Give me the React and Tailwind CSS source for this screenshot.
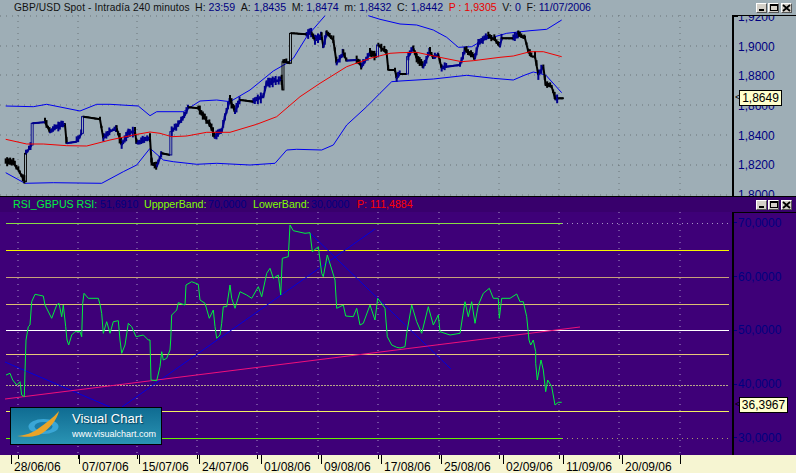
const crop = (ox, oy, list) => {
  const out = [];
  for (let i = 0; i < list.length; i += 2) out.push([ox + list[i] / 3, oy + list[i + 1] / 3]);
  return out;
};
const toPoints = (pts) => pts.map(([x, y]) => `${x.toFixed(1)},${y.toFixed(1)}`).join(" ");

const gridX = [18, 78, 137, 197, 257, 318, 378, 439, 499, 559, 619, 680];
const priceGridY = [16, 46, 75, 105, 135, 165, 195];

const price = [
  ...crop(0, 0, [17, 485, 40, 490, 55, 510, 75, 545, 78, 460, 95, 435, 98, 370, 135, 367, 150, 395, 175, 380, 195, 375, 200, 430, 230, 425, 245, 400, 250, 350, 300, 358, 310, 415, 330, 395, 350, 385, 365, 435, 385, 400, 405, 395, 410, 430, 450, 415, 455, 490, 470, 500, 485, 460, 510, 465, 515, 395, 530, 380, 555, 345, 565, 322, 595, 325, 610, 350, 630, 375, 645, 410, 665, 395, 675, 350, 690, 300, 705, 335, 720, 300, 760, 305, 790, 290, 800, 250, 845, 240, 848, 270, 850, 185, 870, 190, 873, 100, 920, 103, 935, 100, 945, 120, 965, 110, 970, 140, 980, 100, 1000, 120, 1010, 190, 1030, 160, 1040, 182, 1070, 180, 1085, 200, 1110, 160, 1130, 170, 1135, 135, 1160, 160, 1165, 210, 1185, 210, 1190, 235]),
  ...crop(400, 0, [0, 222, 20, 222, 25, 170, 40, 145, 50, 175, 70, 200, 90, 155, 100, 175, 115, 165, 125, 205, 140, 200, 180, 195, 195, 150, 225, 175, 235, 130, 265, 110, 285, 120, 300, 140, 305, 115, 340, 115, 355, 105, 375, 115, 385, 155, 395, 170, 405, 170, 415, 225, 430, 200, 437, 255, 455, 260, 467, 300, 475, 295, 490, 295]),
];

const upperBand = [
  crop(0, 0, [17, 318, 100, 320, 140, 313, 240, 333, 290, 313, 330, 313, 415, 318, 450, 347, 470, 335, 550, 335, 600, 303, 650, 300, 690, 305, 750, 270, 820, 213, 860, 190, 880, 175, 920, 110, 975, 47]),
  [...crop(0, 0, [1105, 47, 1140, 58, 1200, 72]), ...crop(400, 0, [50, 75, 100, 90, 140, 112, 175, 142, 215, 140, 250, 120, 320, 100, 390, 92, 440, 88, 485, 60])],
];
const lowerBand = [
  ...crop(0, 0, [17, 518, 75, 550, 160, 548, 305, 550, 370, 515, 410, 495, 450, 445, 490, 480, 520, 485, 590, 493, 650, 490, 750, 495, 825, 490, 860, 450, 890, 448, 965, 450, 1000, 435, 1040, 375, 1100, 320, 1140, 280, 1175, 245, 1200, 243]),
  ...crop(400, 0, [100, 237, 200, 226, 280, 235, 340, 240, 375, 225, 400, 216, 437, 225, 485, 278]),
];
const average = [
  ...crop(0, 0, [17, 418, 80, 432, 130, 432, 200, 437, 260, 438, 330, 420, 400, 405, 450, 396, 480, 400, 515, 410, 560, 408, 620, 397, 690, 397, 770, 373, 830, 350, 900, 290, 960, 250, 1040, 200, 1110, 175, 1170, 160, 1200, 158]),
  ...crop(400, 0, [50, 157, 110, 170, 185, 185, 220, 182, 300, 172, 340, 168, 390, 155, 430, 155, 485, 170]),
];

const rsi = [
  ...crop(0, 340, [18, 105, 30, 100, 38, 120, 50, 135, 60, 125, 65, 165, 73, 170, 75, 95, 78, 0]),
  ...crop(0, 190, [85, 410, 90, 405, 95, 335, 105, 313, 130, 318, 135, 345, 150, 375, 155, 385, 170, 345, 177, 340, 185, 380, 190, 345, 197, 410, 201, 450, 206, 465, 215, 435, 225, 425, 240, 425, 245, 440, 248, 340, 252, 310, 265, 325, 295, 325, 300, 343, 305, 370, 310, 430, 320, 395, 330, 430, 340, 395, 355, 392, 360, 450, 365, 490, 375, 465, 385, 400, 395, 410, 408, 440, 430, 435, 445, 450]),
  ...crop(0, 340, [450, 0, 453, 120, 470, 122, 480, 80, 485, 35, 490, 60, 500, 55, 510, 30, 512, 0]),
  ...crop(0, 190, [515, 375, 530, 360, 535, 338, 555, 345, 558, 285, 575, 275, 595, 283, 600, 330, 615, 340, 628, 385, 640, 360, 645, 410, 650, 445, 660, 435, 665, 400, 670, 350, 680, 350, 690, 285, 695, 325, 705, 355, 720, 305, 740, 315, 755, 325, 775, 290, 785, 320, 800, 250, 810, 235, 820, 265, 835, 255, 842, 315, 847, 205, 865, 200, 870, 105, 880, 122, 915, 130, 930, 128, 937, 185, 955, 170, 965, 250, 970, 260, 982, 195, 1005, 270, 1010, 355, 1030, 345, 1037, 378, 1060, 380, 1070, 355, 1080, 405, 1090, 400, 1110, 345, 1125, 390, 1133, 325, 1155, 355, 1162, 440, 1175, 465, 1190, 472]),
  ...crop(400, 190, [0, 474, 15, 470, 20, 430, 35, 345, 50, 395, 65, 430, 85, 350, 100, 405, 115, 375, 120, 425, 150, 435, 180, 430, 195, 335, 205, 380, 215, 335, 225, 400, 235, 345, 250, 310, 268, 295, 280, 325, 295, 325, 298, 385, 305, 325, 330, 325, 350, 312, 360, 335, 370, 335, 380, 380, 387, 450]),
  ...crop(400, 340, [392, 15, 400, 0, 407, 35, 407, 70, 412, 120, 423, 60, 430, 90, 437, 155, 443, 120, 455, 140, 465, 195, 475, 187, 485, 187]),
];

const levels = [
  { y: 250, color: "#f4f400" },
  { y: 277, color: "#c8a078" },
  { y: 304, color: "#dcc070" },
  { y: 330, color: "#ffffff" },
  { y: 354, color: "#e8c878" },
  { y: 411, color: "#f4f060" },
];

const headerItems = [
  ["H:", "23:59"],
  ["A:", "1,8435"],
  ["M:", "1,8474"],
  ["m:", "1,8432"],
  ["C:", "1,8442"],
];

const dates = [
  { label: "28/06/06", x: 11, grid: 18 },
  { label: "07/07/06", x: 79, grid: 78 },
  { label: "15/07/06", x: 139, grid: 137 },
  { label: "24/07/06", x: 199, grid: 197 },
  { label: "01/08/06", x: 261, grid: 257 },
  { label: "09/08/06", x: 321, grid: 318 },
  { label: "17/08/06", x: 381, grid: 378 },
  { label: "25/08/06", x: 441, grid: 439 },
  { label: "02/09/06", x: 503, grid: 499 },
  { label: "11/09/06", x: 563, grid: 559 },
  { label: "20/09/06", x: 622, grid: 619 },
  { label: "", x: 680, grid: 680 },
];

// price candles are faked from the traced close line: short wicks every 1.5px
const noise = (x) => {
  const s = Math.sin(x * 12.9898) * 43758.5453;
  return s - Math.floor(s);
};

const Candles = () => {
  const segs = [];
  const wicks = [];
  price.forEach((p, i) => {
    if (i === 0) return;
    const [x0, y0] = price[i - 1];
    const [x1, y1] = p;
    const dy = y1 - y0;
    const dx = Math.max(x1 - x0, 0.3);
    const up = dy < 0;
    const color = up ? "#00008c" : "#000";
    if (up && -dy / dx > 5) {
      const mid = (x0 + x1) / 2;
      segs.push(<rect key={`h${i}`} x={mid - 1} y={y1} width="2" height={-dy} fill="none" stroke={dy < -25 ? "#000" : "#00008c"} strokeWidth="0.9" />);
      return;
    }
    segs.push(<line key={`s${i}`} x1={x0} y1={y0} x2={x1} y2={y1} stroke={color} strokeWidth="2" />);
    for (let x = x0; x < x1; x += 1.5) {
      const y = y0 + (dy * (x - x0)) / dx;
      const h = Math.abs(dy) / dx < 0.2 ? 0.9 : 1.5 + 4 * noise(x);
      wicks.push(<line key={`w${i}-${x}`} x1={x} y1={y - h} x2={x} y2={y + h * noise(x + 3)} stroke={color} strokeWidth="2" />);
    }
  });
  return <g>{wicks}{segs}</g>;
};

const PriceChart = () => (
  <svg viewBox="0 15 732 181" className="block h-[181px] w-[732px]">
    {gridX.map((x) => (
      <line key={x} x1={x} y1="15" x2={x} y2="196" stroke="#6a7478" strokeDasharray="1 5" />
    ))}
    {priceGridY.map((y) => (
      <line key={y} x1="0" y1={y} x2="732" y2={y} stroke="#6a7478" strokeDasharray="1 5" />
    ))}
    <polyline points={toPoints(upperBand[0])} fill="none" stroke="#0000f0" strokeWidth="1" />
    <polyline points={toPoints(upperBand[1])} fill="none" stroke="#0000f0" strokeWidth="1" />
    <polyline points={toPoints(lowerBand)} fill="none" stroke="#0000f0" strokeWidth="1" />
    <Candles />
    <polyline points={toPoints(average)} fill="none" stroke="#f00000" strokeWidth="1" />
  </svg>
);

const RsiChart = () => (
  <svg viewBox="0 212 732 243" className="block h-[243px] w-[732px]">
    {gridX.map((x) => (
      <line key={x} x1={x} y1="212" x2={x} y2="455" stroke="#a894c8" strokeDasharray="1 5" />
    ))}
    {levels.map((l) => (
      <line key={l.y} x1="6" y1={l.y + 0.5} x2="729" y2={l.y + 0.5} stroke={l.color} />
    ))}
    <line x1="6" y1="223.5" x2="562" y2="223.5" stroke="#88dd44" />
    <line x1="562" y1="223.5" x2="730" y2="223.5" stroke="#a894c8" strokeDasharray="1 4" />
    <line x1="6" y1="438.5" x2="562" y2="438.5" stroke="#66f000" />
    <line x1="562" y1="438.5" x2="730" y2="438.5" stroke="#a89a70" strokeDasharray="1 4" />
    <line x1="6" y1="385.5" x2="729" y2="385.5" stroke="#b8a888" strokeDasharray="2 1" />
    <line x1="122" y1="407" x2="375" y2="229" stroke="#0000e0" />
    <line x1="310" y1="233" x2="451" y2="369" stroke="#0000e0" />
    <line x1="5" y1="362" x2="110" y2="407" stroke="#0000e0" />
    <line x1="5" y1="399" x2="580" y2="327" stroke="#f0107a" />
    <polyline points={toPoints(rsi)} fill="none" stroke="#00f040" strokeWidth="1" />
  </svg>
);

const WinButton = ({ children, className = "" }) => (
  <div className={`flex h-[10px] w-[11px] items-center justify-center border border-t-white border-l-white border-r-[#555] border-b-[#555] bg-[#d4d0c8] ${className}`}>
    {children}
  </div>
);

const WinButtons = () => (
  <div className="ml-auto mr-[4px] flex items-center">
    <WinButton className="items-end pb-px">
      <div className="h-[2px] w-[5px] bg-black" />
    </WinButton>
    <WinButton className="ml-px">
      <div className="h-[7px] w-[8px] border border-t-2 border-black" />
    </WinButton>
    <WinButton className="ml-[2px]">
      <svg viewBox="0 0 9 8" className="h-[8px] w-[9px]">
        <path d="M1 1 L8 7 M8 1 L1 7" stroke="#000" strokeWidth="1.8" />
      </svg>
    </WinButton>
  </div>
);

const AxisPrice = () => (
  <div className="relative h-[181px] w-[64px] overflow-hidden border-l-2 border-t border-black">
    <div className="absolute left-0 top-0 h-px w-[4px] bg-black" />
    <div className="-mt-[14px] flex flex-col pl-[4px] text-[12px] text-[#000080]">
      {["1,9200", "1,9000", "1,8800", "1,8600", "1,8400", "1,8200", "1,8000"].map((t) => (
        <div key={t} className="flex h-[29.7px] items-center">{t}</div>
      ))}
    </div>
    <span className="absolute left-[1px] top-[74px] text-[9px] leading-[14px] text-black">&lt;</span>
    <div className="absolute left-[5px] top-[74px] flex h-[16px] w-[43px] items-center justify-center border border-black bg-[#ffffcc] text-[12px] text-black">
      1,8649
    </div>
  </div>
);

const AxisRsi = () => (
  <div className="relative h-[243px] w-[64px] overflow-hidden border-l-2 border-t border-black">
    <div className="-mt-[17px] flex flex-col text-[12px] text-[#000080]">
      {["70,0000", "60,0000", "50,0000", "40,0000", "30,0000"].map((t) => (
        <div key={t} className="flex h-[53.75px] items-center">
          <span className="h-px w-[3px] bg-[#000080]" />
          <span className="ml-px">{t}</span>
        </div>
      ))}
    </div>
    <span className="absolute left-[1px] top-[184px] text-[9px] leading-[14px] text-black">&lt;</span>
    <div className="absolute left-[5px] top-[184px] flex h-[16px] w-[49px] items-center justify-center border border-black bg-[#ffffcc] text-[12px] text-black">
      36,3967
    </div>
  </div>
);

const Logo = () => (
  <div className="absolute left-[10px] top-[210px] flex h-[38px] w-[152px] border border-black bg-gradient-to-b from-[#0f6c92] to-[#2a94b4]">
    <svg viewBox="0 0 60 36" className="h-[36px] w-[60px] shrink-0">
      <ellipse cx="32.5" cy="18.5" rx="15" ry="7.5" fill="#3aa6d6" />
      <ellipse cx="32.5" cy="18.5" rx="9" ry="4.5" fill="#1a7ca8" />
      <path d="M48 3 C46 12 38 22 28 27 C20 29.5 12 29 6 28 C14 27.5 22 25 28 20 C35 15 42 10 48 3 Z" fill="#eaa428" />
    </svg>
    <div className="flex flex-col pl-[1px] text-white">
      <span className="mt-[3px] text-[13px] leading-[16px] [text-shadow:1px_1px_1px_#06405c]">Visual Chart</span>
      <span className="mt-[1px] text-[9px] leading-[12px]">www.visualchart.com</span>
    </div>
  </div>
);

const DateBar = () => (
  <div className="flex h-[18px] bg-[#f6f5d2] pl-[11px] text-[12px] text-black">
    {dates.map((d, i) => {
      const next = dates[i + 1];
      return (
        <div key={d.x} className="relative flex shrink-0" style={{ width: next ? next.x - d.x : 40 }}>
          <span className="h-[9px] w-px bg-black" />
          <span className="absolute top-0 h-[4px] w-px bg-black" style={{ left: d.grid - d.x }} />
          <span className="pl-[2px] pt-[5px] leading-[14px]">{d.label}</span>
        </div>
      );
    })}
  </div>
);

export default function App() {
  return (
    <div className="flex h-[473px] w-[796px] flex-col overflow-hidden font-['Liberation_Sans',Arial,sans-serif]">
      <div className="h-[196px] bg-[#9eaeb6]">
        <div className="flex h-[15px] items-center whitespace-nowrap pl-[14px] text-[10.6px] text-[#111]">
          <span className="w-[181px] text-[10.2px] tracking-[0.12px]">GBP/USD Spot - Intradía 240 minutos</span>
          {headerItems.map(([k, v]) => (
            <span key={k} className="mr-[5.6px]">
              {k} <span className="text-[#000080]">{v}</span>
            </span>
          ))}
          <span className="mr-[5.6px] text-[#e80000]">P : 1,9305</span>
          <span className="mr-[5.6px]">V: <span className="text-[#000080]">0</span></span>
          <span>F: <span className="text-[#000080]">11/07/2006</span></span>
          <WinButtons />
        </div>
        <div className="flex">
          <PriceChart />
          <AxisPrice />
        </div>
      </div>
      <div className="h-px bg-black" />
      <div className="relative flex-1 bg-[#3e0078]">
        <div className="flex h-[15px] items-center whitespace-nowrap bg-[#38006c] pl-[13px] text-[10.6px]">
          <span className="w-[84px] text-[#00f040]">RSI_GBPUS RSI:</span>
          <span className="ml-[3px] w-[44px] text-[#000080]">51,6910</span>
          <span className="w-[62px] text-[#80ff00]">UppperBand:</span>
          <span className="ml-[2px] w-[45px] text-[#000080]">70,0000</span>
          <span className="w-[55px] text-[#80ff00]">LowerBand:</span>
          <span className="ml-[3px] w-[46px] text-[#000080]">30,0000</span>
          <span className="text-[#ff0000]">P:</span>
          <span className="ml-[3px] text-[#ff0000]">111,4884</span>
          <WinButtons />
        </div>
        <div className="flex">
          <RsiChart />
          <AxisRsi />
        </div>
        <Logo />
      </div>
      <DateBar />
    </div>
  );
}
